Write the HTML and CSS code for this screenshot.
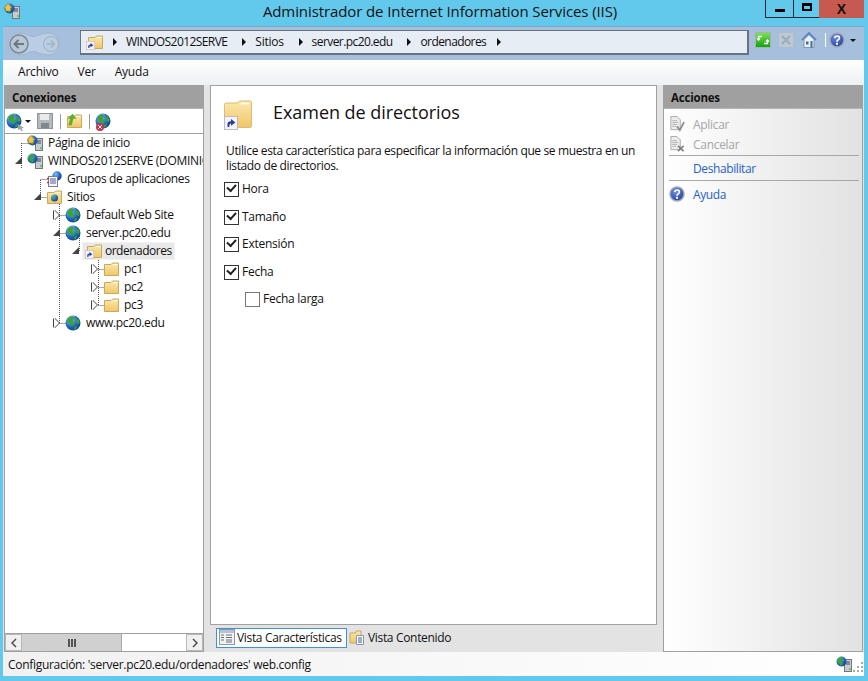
FILE: index.html
```html
<!DOCTYPE html>
<html lang="es">
<head>
<meta charset="utf-8">
<title>Administrador de Internet Information Services (IIS)</title>
<link rel="stylesheet" href="styles.css">
</head>
<body>
<svg class="sprite" width="0" height="0" aria-hidden="true">
  <defs>
    <linearGradient id="gFolder" x1="0" y1="0" x2="0" y2="1"><stop offset="0" stop-color="#fbe9ae"/><stop offset="1" stop-color="#f0c566"/></linearGradient>
    <radialGradient id="gGlobe" cx=".35" cy=".3" r=".8"><stop offset="0" stop-color="#7fc0f5"/><stop offset=".6" stop-color="#1c62b8"/><stop offset="1" stop-color="#123f85"/></radialGradient>
    <radialGradient id="gHelp" cx=".4" cy=".3" r=".8"><stop offset="0" stop-color="#6f8fe0"/><stop offset="1" stop-color="#1c3a9c"/></radialGradient>
    <linearGradient id="gGreen" x1="0" y1="0" x2="0" y2="1"><stop offset="0" stop-color="#7fe05c"/><stop offset="1" stop-color="#12a012"/></linearGradient>
    <symbol id="folder" viewBox="0 0 16 16">
      <path d="M1.500 3.500V14.500H15.500V2H9.500L8 3.500Z" fill="url(#gFolder)" stroke="#c9a95c"/>
      <path d="M10.500 3.500h4" stroke="#fff" stroke-width="1"/>
    </symbol>
    <symbol id="folder-big" viewBox="0 0 28 28">
      <path d="M.5 4.500Q.5 3 2 3H13L15.500 1H26Q27.500 1 27.500 2.500V26Q27.500 27.500 26 27.500H2Q.5 27.500 .5 26Z" fill="url(#gFolder)" stroke="#d8bc78"/>
      <path d="M17 3.500H25" stroke="#fff" stroke-width="1.500"/>
    </symbol>
    <symbol id="shortcut" viewBox="0 0 16 16">
      <rect x=".5" y=".5" width="15" height="15" fill="#f4f4f8" stroke="#b6b6c4"/>
      <path d="M4 12.500V9Q4 6 8 6V3.500L13 7.500 8 11V8.500Q6 8.500 6 12.500Z" fill="#2c3a9c"/>
    </symbol>
    <symbol id="globe" viewBox="0 0 16 16">
      <circle cx="8" cy="8" r="7.500" fill="url(#gGlobe)"/>
      <path d="M3 3.500 7 1.500 9 3 7.500 6 9.500 8 8 11 5.500 9.500 2.500 7ZM11 2.500 14.500 6 14 9 11.500 8ZM9.500 12 12 10.500 11 14 9 14.500Z" fill="#3ba52e"/>
      <path d="M4 2.500A7 7 0 0 1 11 1.600 8 8 0 0 0 4 2.500Z" fill="#d8f0ff"/>
    </symbol>
    <symbol id="server" viewBox="0 0 16 16">
      <rect x="8.500" y="3.500" width="7" height="12" fill="#c6ccd2" stroke="#6f7880"/>
      <path d="M10 6h4M10 8h4" stroke="#3f474e"/>
      <path d="M13 13h2" stroke="#41c941" stroke-width="1.500"/>
      <circle cx="5.500" cy="5.500" r="5" fill="url(#gGlobe)"/>
      <path d="M2 3 5 1 7 3 5.500 6 7 8 5 10 2 6Z" fill="#3ba52e"/>
    </symbol>
    <symbol id="home-server" viewBox="0 0 16 16">
      <use href="#server"/>
      <path d="M0 5 4 .5 8 5H6.500V8h-5V5Z" fill="#f0c54d" stroke="#a87e1e" stroke-width=".6"/>
    </symbol>
    <symbol id="pool" viewBox="0 0 16 16">
      <circle cx="11" cy="5" r="4.700" fill="url(#gGlobe)"/>
      <rect x="2.500" y="5.500" width="9" height="10" fill="#f4f4f6" stroke="#7a7f88"/>
      <path d="M4 8h6M4 10h6M4 12h6" stroke="#4a5fa8"/>
      <path d="M1 7.500h2M1 11.500h2" stroke="#c23a2e" stroke-width="1.500"/>
    </symbol>
    <symbol id="sites" viewBox="0 0 16 16">
      <use href="#folder"/>
      <circle cx="8.500" cy="9" r="3.500" fill="url(#gGlobe)"/>
      <path d="M6.500 7.500 8.500 6.500 9 9 7.500 10.500Z" fill="#3ba52e"/>
    </symbol>
    <symbol id="help" viewBox="0 0 16 16">
      <circle cx="8" cy="8" r="7" fill="url(#gHelp)" stroke="#a3a8b8" stroke-width="1.500"/>
      <path d="M5.700 6.200Q5.900 4 8 4 10.500 4 10.400 6 10.300 7.300 9 8 8 8.600 8 9.800" fill="none" stroke="#fff" stroke-width="1.700"/>
      <rect x="7" y="10.800" width="2" height="2" fill="#fff"/>
    </symbol>
    <symbol id="apply" viewBox="0 0 16 17">
      <path d="M1.500 .5H8L11.500 4V14.500H1.500Z" fill="#ececec" stroke="#a9a9a9"/>
      <path d="M3 5h5M3 7h6M3 9h5M3 11h4" stroke="#b4b4b4"/>
    </symbol>
  </defs>
</svg>

<div class="window">
  <header class="titlebar">
    <svg class="ico title-ico"><use href="#home-server"/></svg>
    <h1 class="title">Administrador de Internet Information Services (IIS)</h1>
    <div class="winbtns">
      <span class="winbtn min"><i></i></span>
      <span class="winbtn max"><i></i></span>
      <span class="winbtn close">X</span>
    </div>
  </header>

  <div class="client">
    <nav class="navbar">
      <div class="backfwd">
        <svg width="54" height="28" viewBox="0 0 54 28">
          <path d="M2 14C2 2 16 2 22 5 28 8 30 6 36 4 44 1 53 5 53 14 53 23 44 27 36 24 30 22 28 20 22 23 16 26 2 26 2 14Z" fill="#b9cee4" stroke="#a2b6cc"/>
          <circle cx="13" cy="14" r="9" fill="#b7c8d8" stroke="#7c8892" stroke-width="1.500"/>
          <path d="M18 14H9M12.500 10 8.500 14 12.500 18" fill="none" stroke="#6e7882" stroke-width="2"/>
          <circle cx="45" cy="14" r="7.500" fill="none" stroke="#a3b2c2"/>
          <path d="M40.500 14H48M45 10.500 48.500 14 45 17.500" fill="none" stroke="#a3b2c2" stroke-width="1.500"/>
        </svg>
      </div>
      <div class="address">
        <span class="addr-ico"><svg class="ico"><use href="#folder"/></svg><svg class="overlay-sm"><use href="#shortcut"/></svg></span>
        <span class="crumb">WINDOS2012SERVE</span>
        <span class="crumb">Sitios</span>
        <span class="crumb">server.pc20.edu</span>
        <span class="crumb">ordenadores</span>
        <span class="crumb-end"></span>
      </div>
      <div class="navtools">
        <svg class="ico" viewBox="0 0 16 16"><rect x=".5" y=".5" width="15" height="15" fill="url(#gGreen)" stroke="#9fb89f"/><path d="M7 4.500H3.500V8M2 6.500 3.500 8 5 6.500M9 11.500H12.500V8M11 9.500 12.500 8 14 9.500" fill="none" stroke="#fff" stroke-width="1.300"/></svg>
        <svg class="ico" viewBox="0 0 16 16"><rect x=".5" y=".5" width="15" height="15" fill="#bcc9d6" stroke="#aebccc"/><path d="M4 4 12 12M12 4 4 12" stroke="#9eaab6" stroke-width="2"/></svg>
        <svg class="ico" viewBox="0 0 16 16"><path d="M1 8 8 1 15 8" fill="none" stroke="#4a7ec0" stroke-width="1.600"/><path d="M3 7.500 8 2.800 13 7.500V15.500H3Z" fill="#eef1f4" stroke="#8a97a6"/><rect x="5" y="9.500" width="2.500" height="3" fill="#3d6fae"/><rect x="9.500" y="9" width="2" height="6.500" fill="#3d6fae"/></svg>
        <span class="nav-sep"></span>
        <svg class="ico"><use href="#help"/></svg>
        <span class="caret"></span>
      </div>
    </nav>

    <div class="menubar">
      <span>Archivo</span><span>Ver</span><span>Ayuda</span>
    </div>

    <main class="workspace">
      <section class="panel conn">
        <h2 class="panel-head">Conexiones</h2>
        <div class="conn-tools">
          <span class="ico-wrap tool-conn"><svg class="ico"><use href="#globe"/></svg><svg class="tool-arrow" viewBox="0 0 8 8"><path d="M1 1 7 5 4.500 5.500 6 8 4.500 8 3 6 1 7Z" fill="#9aa2aa"/></svg></span><span class="caret tool-caret"></span>
          <svg class="ico tool-save" viewBox="0 0 16 16"><rect x=".5" y=".5" width="15" height="15" fill="#b4b9be" stroke="#8e9499"/><rect x="3" y="1" width="9" height="6" fill="#e8eaec"/><rect x="4" y="10" width="8" height="5" fill="#82888e"/></svg>
          <span class="tool-sep"></span>
          <span class="ico-wrap"><svg class="ico"><use href="#folder"/></svg><svg class="tool-up" viewBox="0 0 16 16"><path d="M3 15 5 7H2L8 1 13 7H9L7 15Z" fill="#5fae2b"/></svg></span>
          <span class="tool-sep"></span>
          <span class="ico-wrap"><svg class="ico"><use href="#globe"/></svg><svg class="tool-x" viewBox="0 0 8 8"><circle cx="4" cy="4" r="4" fill="#c8324a"/><path d="M2.200 2.200 5.800 5.800M5.800 2.200 2.200 5.800" stroke="#fff"/></svg></span>
        </div>
        <div class="tree">
          <svg class="tree-lines" width="199" height="200" aria-hidden="true">
            <path d="M16.500 9V34M16.500 9.500H27M35.500 46V64M35.500 45.500H46M35.500 63.500H46M54.500 64V189M54.500 81.500H65M54.500 99.500H65M54.500 189.500H65M74.500 100V118M93.500 118V172M93.500 135.500H104M93.500 153.500H104M93.500 171.500H104" fill="none" stroke="#555" stroke-dasharray="1 1"/>
          </svg>
          <ul class="tree-list">
            <li class="node l0"><span class="exp"></span><svg class="ico"><use href="#home-server"/></svg><span class="label">Página de inicio</span></li>
            <li class="node l0"><span class="exp open"></span><svg class="ico"><use href="#server"/></svg><span class="label">WINDOS2012SERVE (DOMINIO\Administrador)</span></li>
            <li class="node l1"><span class="exp"></span><svg class="ico"><use href="#pool"/></svg><span class="label">Grupos de aplicaciones</span></li>
            <li class="node l1"><span class="exp open"></span><svg class="ico"><use href="#sites"/></svg><span class="label">Sitios</span></li>
            <li class="node l2"><span class="exp closed"></span><svg class="ico"><use href="#globe"/></svg><span class="label">Default Web Site</span></li>
            <li class="node l2"><span class="exp open"></span><svg class="ico"><use href="#globe"/></svg><span class="label">server.pc20.edu</span></li>
            <li class="node l3 selected"><span class="exp open"></span><span class="sel"><span class="addr-ico"><svg class="ico"><use href="#folder"/></svg><svg class="overlay-sm"><use href="#shortcut"/></svg></span><span class="label">ordenadores</span></span></li>
            <li class="node l4"><span class="exp closed"></span><svg class="ico"><use href="#folder"/></svg><span class="label">pc1</span></li>
            <li class="node l4"><span class="exp closed"></span><svg class="ico"><use href="#folder"/></svg><span class="label">pc2</span></li>
            <li class="node l4"><span class="exp closed"></span><svg class="ico"><use href="#folder"/></svg><span class="label">pc3</span></li>
            <li class="node l2"><span class="exp closed"></span><svg class="ico"><use href="#globe"/></svg><span class="label">www.pc20.edu</span></li>
          </ul>
        </div>
        <div class="hscroll">
          <span class="sb-btn"><svg width="8" height="10" viewBox="0 0 8 10"><path d="M6 1 2 5 6 9" fill="none" stroke="#444" stroke-width="1.400"/></svg></span>
          <span class="sb-thumb"><i></i><i></i><i></i></span>
          <span class="sb-track"></span>
          <span class="sb-btn"><svg width="8" height="10" viewBox="0 0 8 10"><path d="M2 1 6 5 2 9" fill="none" stroke="#444" stroke-width="1.400"/></svg></span>
        </div>
      </section>

      <section class="center">
        <div class="content">
          <div class="page-head">
            <span class="page-ico"><svg class="ico-big"><use href="#folder-big"/></svg><svg class="overlay-big"><use href="#shortcut"/></svg></span>
            <h2 class="page-title">Examen de directorios</h2>
          </div>
          <p class="intro">Utilice esta característica para especificar la información que se muestra en un listado de directorios.</p>
          <ul class="checks">
            <li class="check on">Hora</li>
            <li class="check on">Tamaño</li>
            <li class="check on">Extensión</li>
            <li class="check on">Fecha</li>
            <li class="check sub">Fecha larga</li>
          </ul>
        </div>
        <div class="tabs">
          <span class="tab active"><svg class="ico" viewBox="0 0 16 16"><rect x=".5" y=".5" width="15" height="15" fill="#f2f2f2" stroke="#8d98a6"/><rect x="1" y="1" width="14" height="3" fill="#b9c3cf"/><path d="M2 6h3M2 8.500h3M2 11h3M7 6h6M7 8.500h6M7 11h6M7 13h6" stroke="#66707c"/></svg>Vista Características</span>
          <span class="tab"><svg class="ico" viewBox="0 0 16 16"><path d="M1 4H7V2H12V14H1Z" fill="url(#gFolder)" stroke="#c9a95c"/><path d="M7.500 6.500H14.500V15.500H7.500Z" fill="#fafafa" stroke="#8d98a6"/><path d="M9 9h4M9 11h4M9 13h4" stroke="#3c63a8"/></svg>Vista Contenido</span>
        </div>
      </section>

      <aside class="panel actions">
        <h2 class="panel-head">Acciones</h2>
        <ul class="action-list">
          <li class="action off"><svg class="ico" viewBox="0 0 16 17"><use href="#apply"/><path d="M8 11 11 15 15.500 6.500" fill="none" stroke="#8e8e8e" stroke-width="2"/></svg>Aplicar</li>
          <li class="action off"><svg class="ico" viewBox="0 0 16 17"><use href="#apply"/><path d="M9 10.500 15 16M15 10.500 9 16" stroke="#7d7d7d" stroke-width="1.700"/></svg>Cancelar</li>
          <li class="action-sep"></li>
          <li class="action link"><span class="ico-gap"></span>Deshabilitar</li>
          <li class="action-sep"></li>
          <li class="action link"><svg class="ico"><use href="#help"/></svg>Ayuda</li>
        </ul>
      </aside>
    </main>

    <footer class="statusbar">
      <span class="status-text">Configuración: 'server.pc20.edu/ordenadores' web.config</span>
      <svg class="ico status-ico"><use href="#server"/></svg>
      <svg class="grip" width="11" height="11" viewBox="0 0 11 11"><path d="M8 0h2v2H8zM4 4h2v2H4zM8 4h2v2H8zM0 8h2v2H0zM4 8h2v2H4zM8 8h2v2H8z" fill="#a9a9a9"/></svg>
    </footer>
  </div>
</div>
</body>
</html>
```
FILE: styles.css
```css
* { box-sizing: border-box; }
html, body { margin: 0; padding: 0; height: 100%; overflow: hidden; }
body { font-family: "Open Sans", "Noto Sans", sans-serif; font-size: 12px; color: #111; background: #63c9ec; }
ul { list-style: none; margin: 0; padding: 0; }
h1, h2, p { margin: 0; font-weight: normal; }
.sprite { position: absolute; }
.ico { width: 16px; height: 16px; flex: none; display: block; }

.window { width: 868px; height: 681px; display: flex; flex-direction: column; padding: 0 4px 5px 3px; }

.titlebar { height: 26px; flex: none; margin: 0 -4px 0 -3px; padding-left: 4px; display: flex; align-items: flex-start; position: relative; background: #63c9ec; }
.title-ico { margin-top: 3px; }
.title { position: absolute; left: 0; right: 0; top: 0; text-align: center; font-size: 15px; line-height: 22px; color: #111; padding-left: 12px; letter-spacing: -.1px; }
.winbtns { margin-left: auto; margin-right: 4px; display: flex; height: 18px; position: relative; }
.winbtn { height: 18px; border: 1px solid #1d2a30; border-top: 0; border-left-width: 1px; display: flex; align-items: center; justify-content: center; }
.min { width: 28px; border-right: 0; }
.min i { width: 10px; height: 3px; background: #000; margin-top: 3px; }
.max { width: 26px; border-right: 0; }
.max i { width: 10px; height: 8px; border: 2px solid #000; border-top-width: 3px; margin-top: -3px; }
.close { width: 45px; background: #c75a50; border: 0; font-family: "Liberation Sans", sans-serif; font-weight: bold; font-size: 14px; color: #111; padding-bottom: 1px; }

.client { flex: 1; min-height: 0; display: flex; flex-direction: column; background: #e3e3e3; }

.navbar { height: 34px; flex: none; display: flex; align-items: flex-start; padding-top: 3px; background: #a5bfdc; border-top: 1px solid #7fa9ca; }
.backfwd { width: 77px; flex: none; padding-left: 3px; height: 28px; }
.address { width: 669px; height: 25px; flex: none; display: flex; align-items: center; padding-left: 6px; background: #e6edf5; border: 1px solid #6a7280; border-width: 1px 2px 2px 1px; }
.addr-ico { position: relative; width: 16px; height: 16px; flex: none; display: block; }
.overlay-sm { position: absolute; left: -1px; top: 7px; width: 9px; height: 9px; }
.crumb { padding-left: 13px; margin-left: 15px; position: relative; white-space: nowrap; letter-spacing: -.58px; padding-bottom: 2px; }
.addr-ico + .crumb { margin-left: 10px; }
.crumb:nth-of-type(3) { letter-spacing: -.26px; }
.crumb::before, .crumb-end::before { content: ""; position: absolute; left: 0; top: 5px; border-left: 4px solid #111; border-top: 4px solid transparent; border-bottom: 4px solid transparent; }
.crumb-end { position: relative; margin-left: 11px; width: 8px; height: 18px; }
.navtools { display: flex; align-items: center; margin-left: 6px; margin-top: 2px; }
.navtools .ico + .ico { margin-left: 7px; }
.nav-sep { width: 1px; height: 14px; background: #fff; margin: 0 3px 0 8px; }
.caret { width: 0; height: 0; border-top: 3px solid #111; border-left: 3px solid transparent; border-right: 3px solid transparent; margin-left: 5px; }

.menubar { height: 25px; flex: none; display: flex; align-items: center; padding-left: 15px; gap: 19px; background: linear-gradient(#fff, #eef0f2); letter-spacing: -.2px; }
.menubar span { padding-bottom: 2px; }

.workspace { flex: 1; min-height: 0; display: grid; grid-template-columns: 200px 447px 200px; column-gap: 6px; padding-left: 1px; }

.panel { border: 1px solid #a0a0a0; border-top: 0; display: flex; flex-direction: column; min-height: 0; height: 567px; overflow: hidden; }
.panel-head { height: 24px; flex: none; margin: 0 -1px; padding-left: 8px; background: #a0a0a0; font-weight: bold; font-size: 11.500px; line-height: 25px; letter-spacing: -.2px; color: #111; border-bottom: 1px solid #b5b5b5; }

.conn { background: #fff; }
.conn-tools { height: 25px; flex: none; display: flex; align-items: center; padding-left: 1px; border-bottom: 1px solid #a0a0a0; background: #fff; }
.tool-arrow { position: absolute; right: -3px; bottom: -2px; width: 8px; height: 8px; }
.tool-caret { margin-left: 3px; margin-right: 6px; }
.tool-save { margin-right: 7px; }
.tool-sep { width: 1px; height: 15px; background: #9a9a9a; margin-right: 5px; }
.ico-wrap { position: relative; display: block; width: 16px; height: 16px; margin-right: 7px; flex: none; }
.ico-wrap.tool-conn { margin-right: 0; }
.tool-up { position: absolute; left: 0; top: 0; width: 13px; height: 13px; }
.tool-x { position: absolute; left: 1px; bottom: -2px; width: 8px; height: 8px; }
.ico-wrap:last-child { margin-right: 0; }

.tree { flex: 1; min-height: 0; position: relative; overflow: hidden; }
.tree-lines { position: absolute; left: 0; top: 0; }
.tree-list { position: relative; }
.node { height: 18px; display: flex; align-items: center; white-space: nowrap; }
.l0 { padding-left: 7px; }
.l1 { padding-left: 26px; }
.l2 { padding-left: 45px; }
.l3 { padding-left: 64px; }
.l4 { padding-left: 83px; }
.exp { width: 15px; flex: none; height: 10px; position: relative; }
.exp.open::before { content: ""; position: absolute; left: 3px; top: 1px; border-right: 7px solid #444; border-top: 7px solid transparent; }
.exp.closed::before { content: ""; position: absolute; left: 4px; top: 0; border-left: 5px solid #fff; border-top: 5px solid transparent; border-bottom: 5px solid transparent; filter: drop-shadow(1px 0 0 #444) drop-shadow(-1px 0 0 #444); }
.label { flex: 1; min-width: 0; overflow: hidden; margin-left: 5px; letter-spacing: -.33px; padding-bottom: 2px; }
.sel { display: flex; align-items: center; height: 18px; width: 93px; margin-left: -2px; flex: none; padding-left: 3px; background: #e9e9e9; border: 1px solid #f2f2f2; }
.sel .label { margin-left: 3px; letter-spacing: -.5px; }

.hscroll { height: 18px; flex: none; display: flex; border-top: 1px solid #a0a0a0; background: #fff; }
.sb-btn { width: 17px; flex: none; background: #f0f0f0; border: 1px solid #b8b8b8; display: flex; align-items: center; justify-content: center; }
.sb-thumb { width: 100px; flex: none; background: #d0d0d0; border-right: 1px solid #a8a8a8; display: flex; align-items: center; justify-content: center; gap: 1px; }
.sb-thumb i { width: 2px; height: 8px; background: #555; }
.sb-track { flex: 1; }

.center { display: flex; flex-direction: column; min-height: 0; }
.content { height: 540px; flex: none; background: #fff; border: 1px solid #a0a0a0; padding: 14px 15px 0 13px; }
.page-head { display: flex; align-items: flex-start; height: 32px; }
.page-ico { position: relative; width: 28px; height: 28px; flex: none; display: block; }
.ico-big { width: 28px; height: 28px; display: block; }
.overlay-big { position: absolute; left: 0; bottom: -2px; width: 14px; height: 14px; }
.page-title { margin-left: 21px; font-size: 18px; line-height: 24px; letter-spacing: -.05px; color: #111; }
.intro { margin: 11px 0 0 2px; width: 420px; line-height: 15px; letter-spacing: -.37px; }
.checks { margin-top: 3px; }
.check { height: 27.500px; display: flex; align-items: center; letter-spacing: -.26px; position: relative; padding-left: 18px; padding-bottom: 2px; }
.check::before { content: ""; position: absolute; left: 0; top: 6px; width: 13px; height: 13px; border: 1px solid #333; background: #fff; }
.check.on::after { content: ""; position: absolute; left: 3px; top: 8px; width: 7px; height: 4px; border-left: 2px solid #222; border-bottom: 2px solid #222; transform: rotate(-48deg); }
.check.sub { padding-left: 39px; }
.check.sub::before { left: 21px; border-color: #777; }

.tabs { flex: none; display: flex; align-items: center; padding: 3px 0 0 6px; }
.tab { display: flex; align-items: center; height: 20px; gap: 2px; white-space: nowrap; letter-spacing: -.33px; padding-bottom: 2px; }
.tab.active { width: 131px; padding-left: 2px; border: 1px solid #3b90e8; background: #fff; margin-right: 2px; }
.tab:last-child .ico { margin-right: 1px; }

.actions { background: linear-gradient(90deg, #fff, #e2e2e2); }
.action-list { padding: 5px 3px 0 5px; }
.action { height: 20px; display: flex; align-items: center; letter-spacing: -.3px; }
.action .ico, .ico-gap { width: 16px; flex: none; margin-right: 8px; }
.ico-gap { height: 1px; }
.action.off { color: #a6a6a6; }
.action.link { color: #1f62c8; height: 24px; letter-spacing: -.4px; }
.action-sep { height: 1px; background: #a8a8a8; margin-top: 1px; }
.link + .action-sep { margin-top: 0; }
.action.link:last-child { height: 26px; }

.statusbar { height: 24px; flex: none; margin-top: 1px; display: flex; align-items: center; padding-left: 5px; background: linear-gradient(90deg, #f1f1f1, #fff); }
.status-text { letter-spacing: -.3px; }
.status-ico { margin-left: auto; }
.grip { margin: 6px 0 0 1px; }
```
